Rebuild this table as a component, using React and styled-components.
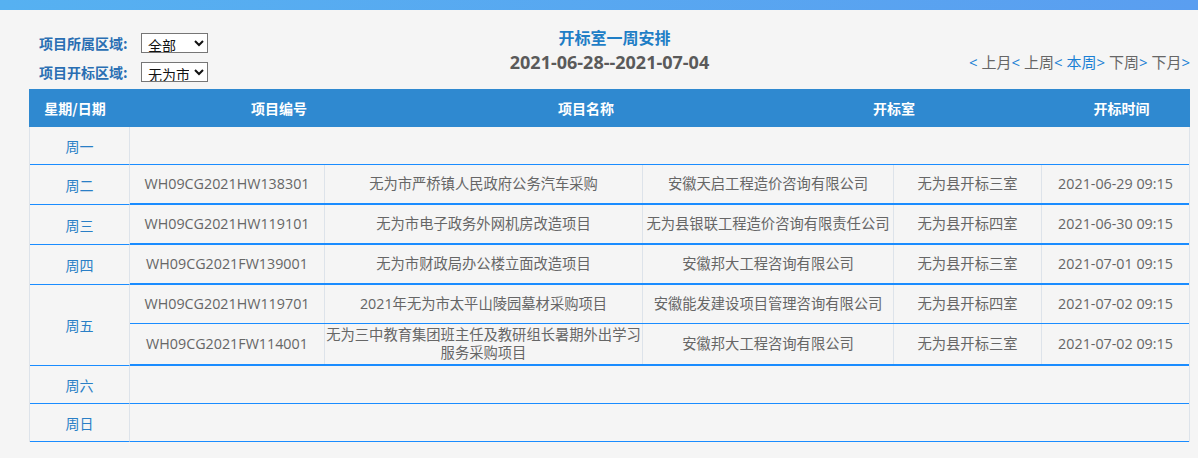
import React from "react";
import styled, { createGlobalStyle } from "styled-components";

const GlobalStyle = createGlobalStyle`
    body {
        margin: 0;
        background: #f5f5f5;
        font-family: "Open Sans", "Noto Sans CJK SC", sans-serif;
        font-size: 14px;
    }
`;

const days = [
    { day: "周一", items: [] },
    {
        day: "周二",
        items: [
            ["WH09CG2021HW138301", "无为市严桥镇人民政府公务汽车采购", "安徽天启工程造价咨询有限公司", "无为县开标三室", "2021-06-29 09:15"],
        ],
    },
    {
        day: "周三",
        items: [
            ["WH09CG2021HW119101", "无为市电子政务外网机房改造项目", "无为县银联工程造价咨询有限责任公司", "无为县开标四室", "2021-06-30 09:15"],
        ],
    },
    {
        day: "周四",
        items: [
            ["WH09CG2021FW139001", "无为市财政局办公楼立面改造项目", "安徽邦大工程咨询有限公司", "无为县开标三室", "2021-07-01 09:15"],
        ],
    },
    {
        day: "周五",
        items: [
            ["WH09CG2021HW119701", "2021年无为市太平山陵园墓材采购项目", "安徽能发建设项目管理咨询有限公司", "无为县开标四室", "2021-07-02 09:15"],
            ["WH09CG2021FW114001", "无为三中教育集团班主任及教研组长暑期外出学习服务采购项目", "安徽邦大工程咨询有限公司", "无为县开标三室", "2021-07-02 09:15"],
        ],
    },
    { day: "周六", items: [] },
    { day: "周日", items: [] },
];

// body column widths after the day column
const cols = [195, 318, 251, 148, 148];
const headCols = [
    { title: "星期/日期", w: 92 },
    { title: "项目编号", w: 316 },
    { title: "项目名称", w: 298 },
    { title: "开标室", w: 318 },
    { title: "开标时间" },
];

function App() {
    return (
        <>
            <GlobalStyle />
            <TopBar />
            <Page>
                <Toolbar>
                    <Filters>
                        <FilterRow>
                            <Label>项目所属区域:</Label>
                            <Select defaultValue="全部">
                                <option>全部</option>
                            </Select>
                        </FilterRow>
                        <FilterRow>
                            <Label>项目开标区域:</Label>
                            <Select defaultValue="无为市">
                                <option>无为市</option>
                            </Select>
                        </FilterRow>
                    </Filters>
                    <TitleBlock>
                        <Title>开标室一周安排</Title>
                        <DateRange>2021-06-28--2021-07-04</DateRange>
                    </TitleBlock>
                    <Nav>
                        <Arrow>&lt; </Arrow><NavLink>上月</NavLink>
                        <Arrow>&lt; </Arrow><NavLink>上周</NavLink>
                        <Arrow>&lt; </Arrow><NavLink $current>本周</NavLink>
                        <Arrow>&gt; </Arrow><NavLink>下周</NavLink>
                        <Arrow>&gt; </Arrow><NavLink>下月</NavLink>
                        <Arrow>&gt;</Arrow>
                    </Nav>
                </Toolbar>

                <Table>
                    <HeadRow>
                        {headCols.map((c) => (
                            <HeadCell key={c.title} $w={c.w}>
                                {c.title}
                            </HeadCell>
                        ))}
                    </HeadRow>
                    {days.map((d) => (
                        <DayGroup key={d.day}>
                            <DayCell>{d.day}</DayCell>
                            <Entries $empty={d.items.length === 0}>
                                {d.items.map((item) => (
                                    <Entry key={item[0]}>
                                        {item.map((text, i) => (
                                            <Cell key={i} $w={cols[i]} $last={i === item.length - 1}>
                                                {text}
                                            </Cell>
                                        ))}
                                    </Entry>
                                ))}
                            </Entries>
                        </DayGroup>
                    ))}
                </Table>
            </Page>
        </>
    );
}

const TopBar = styled.div`
    height: 10px;
    background: linear-gradient(to right, #56b1f1, #5a9ef0);
`;

const Page = styled.div`
    padding: 0 8px 20px 29px;
`;

const Toolbar = styled.div`
    display: grid;
    grid-template-columns: 1fr auto 1fr;
    height: 63px;
    padding-top: 16px;
`;

const Filters = styled.div`
    display: flex;
    flex-direction: column;
    gap: 9px;
    margin-top: 7px;
    padding-left: 10px;
`;

const FilterRow = styled.div`
    display: flex;
    align-items: center;
    height: 20px;
`;

const Label = styled.span`
    width: 102px;
    color: #2a6fb3;
    font-weight: bold;
    font-size: 14px;
    font-family: "Noto Sans CJK SC", sans-serif;
`;

const Select = styled.select`
    width: 67px;
    height: 20px;
    border: 1px solid #767676;
    border-radius: 0;
    background: #fff;
    color: #111;
    font-size: 14px;
    font-family: "Noto Sans CJK SC", sans-serif;
    padding: 0 2px;
`;

const TitleBlock = styled.div`
    display: flex;
    flex-direction: column;
    align-items: center;
    gap: 3px;
`;

const Title = styled.div`
    color: #1f7ec6;
    font-size: 16px;
    font-weight: bold;
    line-height: 22px;
    font-family: "Noto Sans CJK SC", sans-serif;
    padding-left: 10px;
`;

const DateRange = styled.div`
    color: #5a5a5a;
    font-size: 18px;
    font-weight: bold;
    line-height: 22px;
`;

const Nav = styled.div`
    justify-self: end;
    padding-top: 26px;
    line-height: 20px;
    font-size: 15px;
    white-space: pre;
`;

const Arrow = styled.span`
    color: #1a7fd4;
`;

const NavLink = styled.span`
    color: ${(p) => (p.$current ? "#1a7fd4" : "#666")};
    font-family: "Noto Sans CJK SC", sans-serif;
`;

const Table = styled.div`
    width: 1161px;
    color: #666;
`;

const HeadRow = styled.div`
    display: flex;
    height: 38px;
    background: #2f89d0;
    color: #fff;
    font-weight: bold;
    font-family: "Noto Sans CJK SC", sans-serif;
`;

const HeadCell = styled.div`
    ${(p) => (p.$w ? `width: ${p.$w}px;` : "flex: 1;")}
    display: flex;
    align-items: center;
    justify-content: center;
`;

const DayGroup = styled.div`
    display: flex;
    border-left: 1px solid #dde3ea;
    border-right: 1px solid #dde3ea;
`;

const DayCell = styled.div`
    box-sizing: border-box;
    width: 100px;
    flex-shrink: 0;
    display: flex;
    align-items: center;
    justify-content: center;
    border-right: 1px solid #dde3ea;
    border-bottom: 1px solid #1a8cff;
    color: #2a7fc6;
    font-family: "Noto Sans CJK SC", sans-serif;
`;

const Entries = styled.div`
    flex: 1;
    display: flex;
    flex-direction: column;
    ${(p) => p.$empty && "height: 37px; border-bottom: 1px solid #1a8cff;"}
`;

const Entry = styled.div`
    display: flex;
    min-height: 38px;
    border-bottom: 1px solid #1a8cff;

    &:last-child {
        border-bottom-width: 2px;
    }
`;

const Cell = styled.div`
    box-sizing: border-box;
    ${(p) => (p.$last ? "flex: 1;" : `width: ${p.$w}px;`)}
    display: flex;
    align-items: center;
    justify-content: center;
    text-align: center;
    padding: 2px 1px;
    line-height: 18px;
    font-size: 14.3px;
    ${(p) => !p.$last && "border-right: 1px solid #dde3ea;"}
    font-family: "Open Sans", "Noto Sans CJK SC", sans-serif;
`;

export default App;
